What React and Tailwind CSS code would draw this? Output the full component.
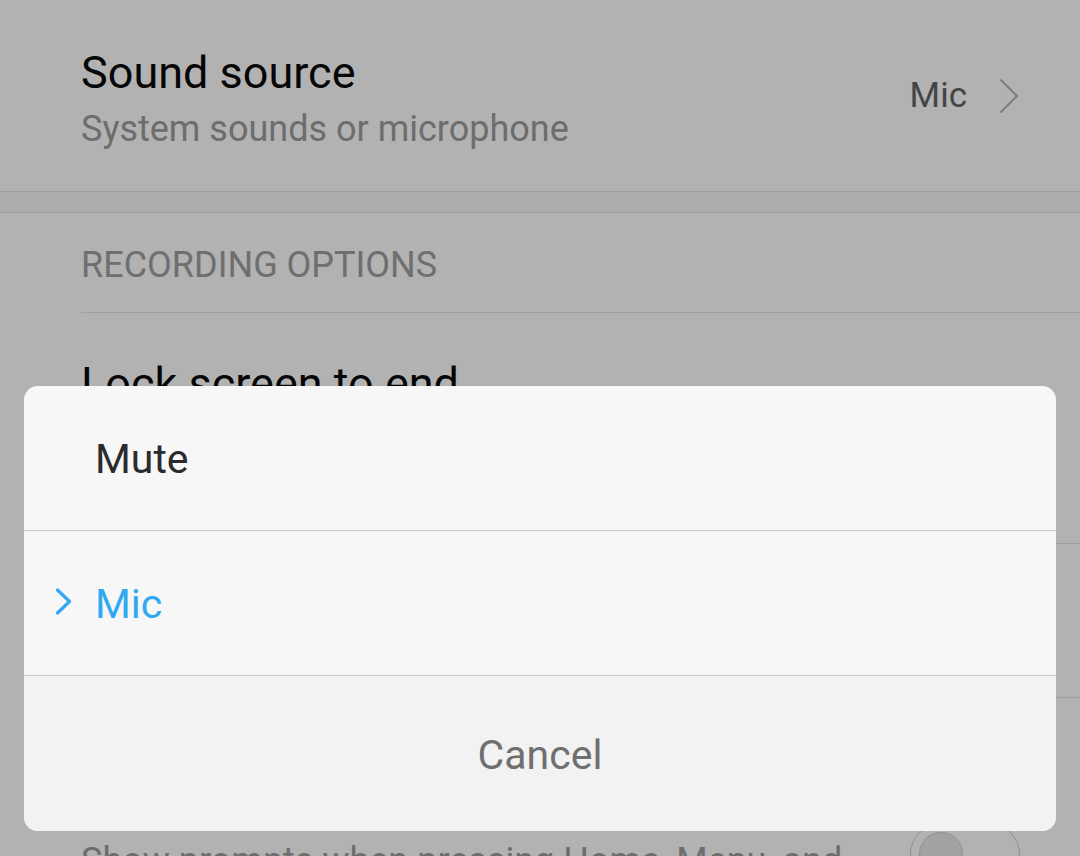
export default function App() {
  return (
    <div className="relative h-[856px] overflow-hidden bg-white font-['Roboto',sans-serif]">
      {/* settings page behind the sheet */}
      <div className="flex h-[191px] items-center justify-between pl-[81px] pr-[61px]">
        <div className="self-start pt-[47px]">
          <div className="text-[45px] leading-[52px] text-[#0a0a0a]">Sound source</div>
          <div className="mt-[8px] text-[36px] leading-[44px] text-[#9c9c9c]">System sounds or microphone</div>
        </div>
        <div className="flex items-center gap-[32px]">
          <span className="text-[35px] leading-[44px] text-[#646464]">Mic</span>
          <svg width="20" height="36" viewBox="0 0 20 36" fill="none">
            <path d="M1.5 1.5 L18 18 L1.5 34.5" stroke="#b5b5b5" strokeWidth="2.2" />
          </svg>
        </div>
      </div>
      <div className="h-[22px] border-y border-[#e5e5e5] bg-[#f7f7f7]" />

      <div className="ml-[81px] h-[100px] border-b border-[#e5e5e5] pt-[30px] text-[36px] leading-[44px] text-[#a0a0a0]">
        RECORDING OPTIONS
      </div>

      <div className="ml-[81px] flex h-[231px] items-start justify-between border-b border-[#e5e5e5] pr-[60px] pt-[45px]">
        <div>
          <div className="text-[45px] leading-[52px] text-[#0a0a0a]">Lock screen to end</div>
          <div className="mt-[8px] text-[36px] leading-[44px] text-[#9c9c9c]">Lock the screen to stop recording</div>
        </div>
      </div>

      <div className="ml-[81px] flex h-[154px] items-center justify-between border-b border-[#e5e5e5] pr-[60px]">
        <div className="text-[45px] leading-[52px] text-[#0a0a0a]">Show touches</div>
      </div>

      <div className="flex items-start justify-between pl-[81px] pr-[60px]">
        <div className="pt-[81px]">
          <div className="text-[45px] leading-[52px] text-[#0a0a0a]">Navigation key prompts</div>
          <div className="mt-[8px] text-[36px] leading-[44px] text-[#9c9c9c]">Show prompts when pressing Home, Menu, and</div>
        </div>
        <div className="mt-[126px] flex h-[60px] w-[110px] shrink-0 items-center rounded-full border border-[#cccccc] bg-white pl-[8px]">
          <div className="h-[44px] w-[44px] rounded-full border border-[#cfcfcf] bg-[#e9e9e9]" />
        </div>
      </div>

      {/* dim */}
      <div className="absolute inset-0 bg-black/30" />

      {/* action sheet */}
      <div className="absolute bottom-[25px] left-[24px] right-[24px] overflow-hidden rounded-[14px] bg-[#f7f7f7]">
        <div className="flex h-[145px] items-center border-b border-[#c9c9c9] pl-[71px] pt-[4px] text-[41px] text-[#2b2b2b]">
          Mute
        </div>
        <div className="relative flex h-[145px] items-center border-b border-[#c9c9c9] pl-[71px] pt-[4px] text-[41px] text-[#33a8f2]">
          <svg className="absolute left-[31px] top-[57px]" width="17" height="27" viewBox="0 0 17 27" fill="none">
            <path d="M2.5 2 L14.5 13.5 L2.5 25" stroke="#33a8f2" strokeWidth="3.2" strokeLinecap="round" strokeLinejoin="round" />
          </svg>
          Mic
        </div>
        <div className="flex h-[155px] items-center justify-center bg-[#f2f2f2] pt-[4px] text-[41px] text-[#6f6f6f]">
          Cancel
        </div>
      </div>
    </div>
  )
}
